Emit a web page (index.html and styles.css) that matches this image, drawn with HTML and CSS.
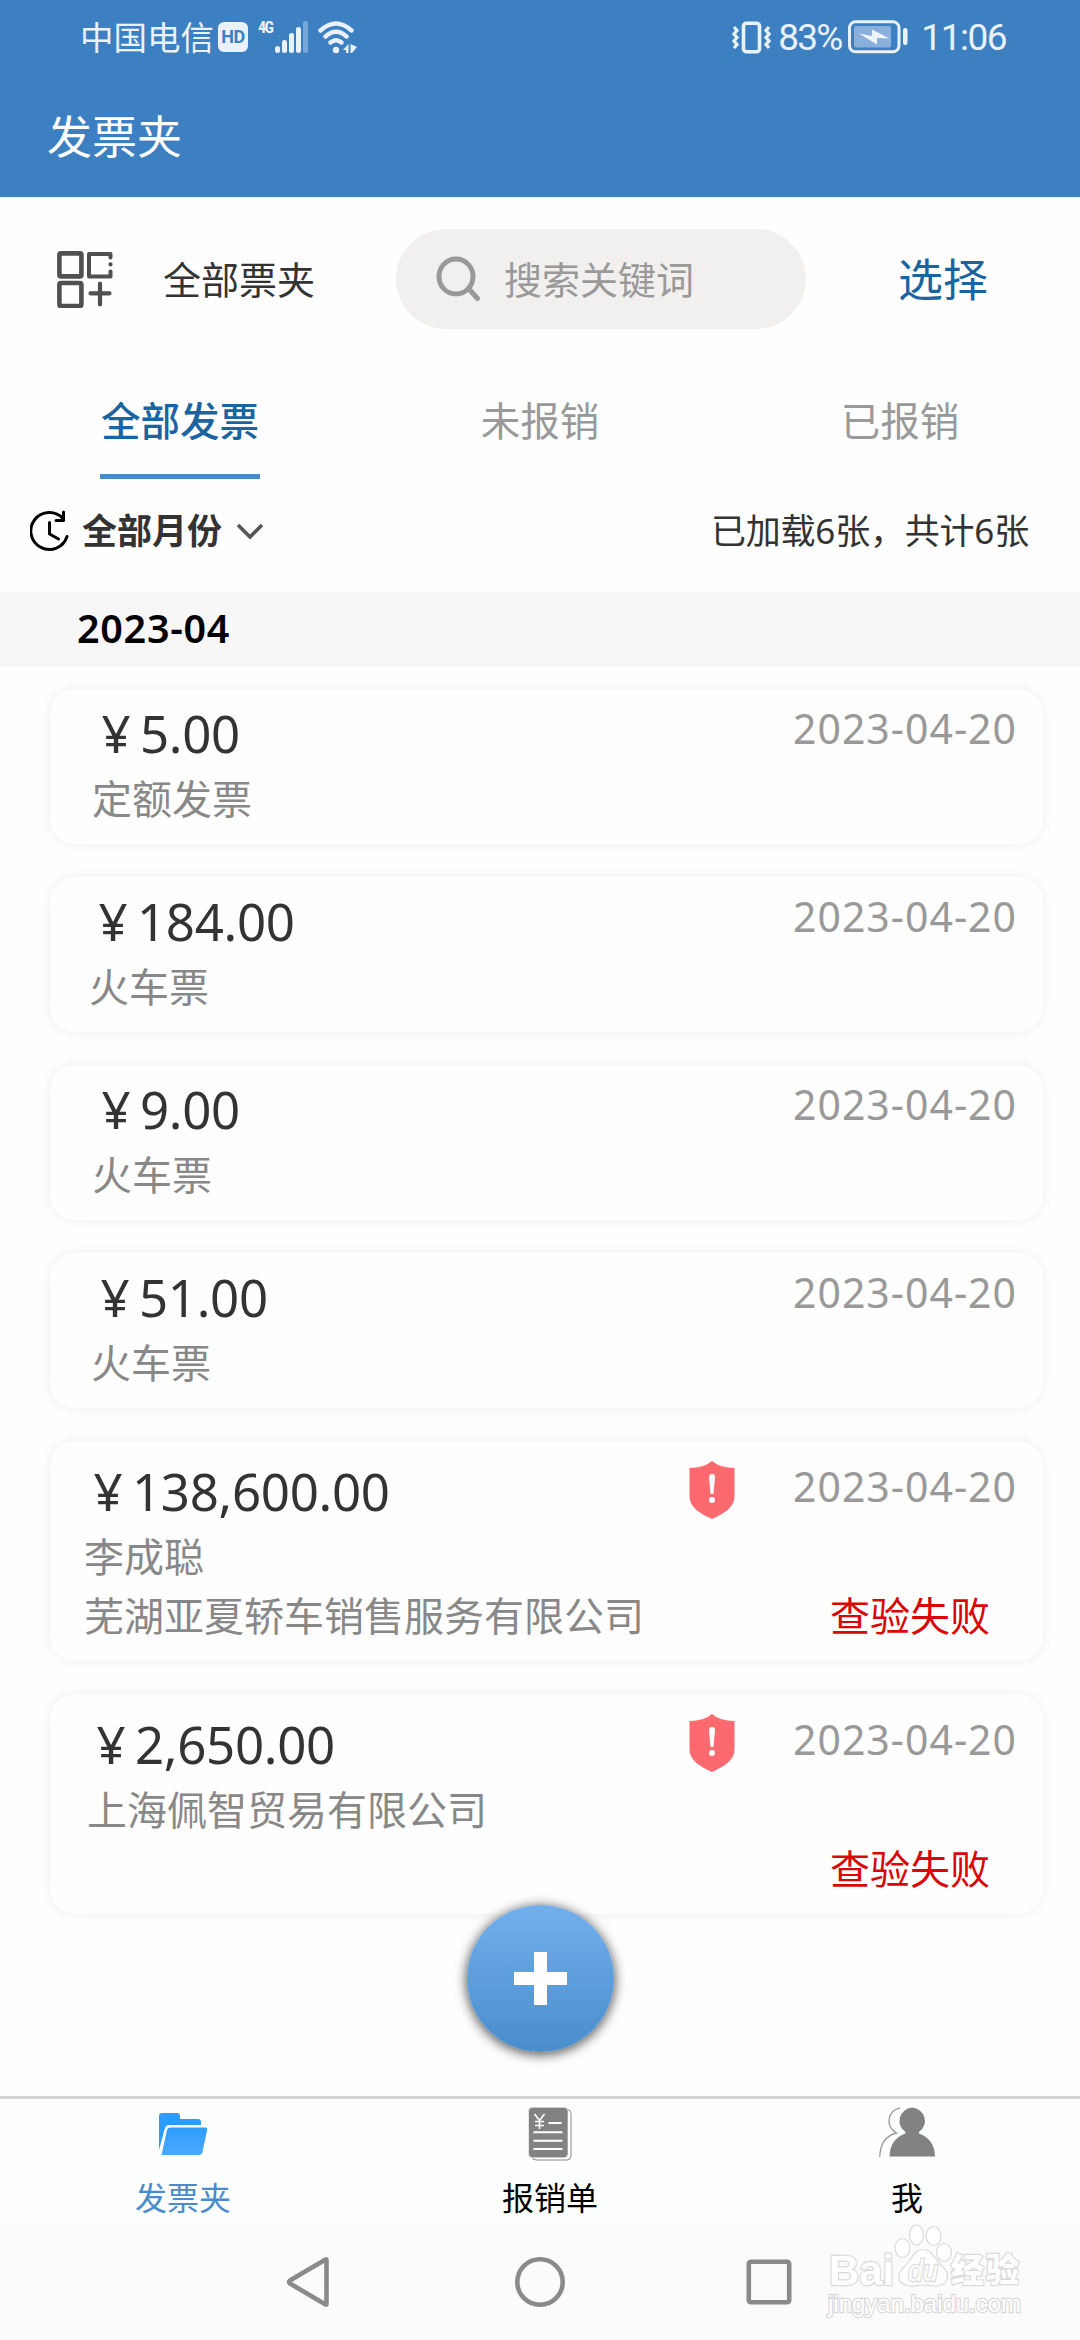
FILE: index.html
```html
<!DOCTYPE html>
<html lang="zh-CN">
<head>
<meta charset="utf-8">
<title>发票夹</title>
<link rel="stylesheet" href="styles.css">
</head>
<body>
<div class="screen">
  <header class="header">
    <div class="status">
      <div class="status-left">
        <span class="carrier">中国电信</span>
        <span class="hd">HD</span>
        <span class="net">4G</span>
        <svg class="signal" width="33" height="32" viewBox="0 0 33 32" fill="#e9f1fb">
          <rect x="0" y="25" width="5" height="7" rx="2.5"/><rect x="7" y="19" width="5" height="13" rx="2.2"/><rect x="14" y="12" width="5" height="20" rx="2.2"/><rect x="21" y="6" width="5" height="26" rx="2.2"/><rect x="28" y="0" width="5" height="32" rx="2.2" opacity=".35"/>
        </svg>
        <svg width="39" height="33" viewBox="0 0 39 33" fill="none" stroke="#e9f1fb" stroke-width="4.4" stroke-linecap="round">
          <path d="M2.5 9.5Q18 -4.5 33.500 9.500M7.500 15.500Q18 6 28.500 15.500M12.500 21.500Q18 17 23.500 21.500"/>
          <circle cx="18" cy="29" r="3.200" fill="#e9f1fb" stroke="none"/>
          <path d="M30.500 23v9h-2.500v-3h-3zM32.500 23v9l1.500 0 5-6z" fill="#e9f1fb" stroke="none"/>
        </svg>
      </div>
      <div class="status-right">
        <svg width="39" height="33" viewBox="0 0 39 33" fill="none" stroke="#e9f1fb">
          <rect x="11.500" y="2.200" width="16" height="28.600" rx="3" stroke-width="3.600"/>
          <path d="M2 6l3 3.500-3 3.500 3 3.500-3 3.500 3 3.500-3 3.500M37 6l-3 3.500 3 3.500-3 3.500 3 3.500-3 3.500 3 3.500" stroke-width="3.200"/>
        </svg>
        <span class="percent">83%</span>
        <svg width="61" height="34" viewBox="0 0 61 34">
          <rect x="1.500" y="1.800" width="49.500" height="30" rx="6" fill="none" stroke="#e9f1fb" stroke-width="3"/>
          <rect x="6" y="6" width="37" height="21.500" rx="2" fill="#89b0dc"/>
          <path d="M11 13.500L24 16V9.500L41.500 18.500 29 18v6.500z" fill="#eff5fc"/>
          <rect x="55" y="8" width="4.500" height="17" rx="2.200" fill="#e9f1fb"/>
        </svg>
        <span class="clock">11:06</span>
      </div>
    </div>
    <h1 class="title">发票夹</h1>
  </header>

  <div class="toolbar">
    <div class="folder-pick">
      <svg width="56" height="57" viewBox="0 0 56 57" fill="none" stroke="#505050" stroke-width="4.600" stroke-linecap="round" stroke-linejoin="round">
        <rect x="2.400" y="2.400" width="22" height="23" rx="1.500"/><rect x="2.400" y="32" width="22" height="23" rx="1.500"/>
        <path d="M53.500 6.500V3H32V25.500H53.500V20.500" stroke-width="4"/><path d="M53.500 13.300v.2M43 32.500V53.500M33.500 42.300H52.500" stroke-width="4.200"/>
      </svg>
      <span>全部票夹</span>
    </div>
    <div class="search">
      <svg width="46" height="46" viewBox="0 0 46 46" fill="none" stroke="#999" stroke-width="5"><ellipse cx="20" cy="20.500" rx="17" ry="17.500"/><path d="M32.500 32.500L41.500 42.500" stroke-linecap="round"/></svg>
      <span>搜索关键词</span>
    </div>
    <a class="select">选择</a>
  </div>

  <nav class="tabs">
    <a class="tab tab-active"><span>全部发票</span></a>
    <a class="tab"><span>未报销</span></a>
    <a class="tab"><span>已报销</span></a>
  </nav>

  <div class="filter">
    <div class="month-pick">
      <svg width="40" height="43" viewBox="0 0 40 43" fill="none" stroke="#000" stroke-width="3" stroke-linecap="round" stroke-linejoin="round"><path d="M33 8.500A18.500 18.500 0 1 0 37 26.500"/><path d="M19.500 12.500V24L28.500 29M33.500 2V10.500H26"/></svg>
      <span>全部月份</span>
      <svg class="chevron" width="28" height="17" viewBox="0 0 28 17" fill="none" stroke="#555" stroke-width="3.600"><path d="M2 2L14 14 26 2"/></svg>
    </div>
    <span class="count">已加载6张，共计6张</span>
  </div>

  <h2 class="month">2023-04</h2>

  <main class="list">
    <article class="card">
      <div class="amount"><span class="yen">¥</span>5.00</div><time class="date">2023-04-20</time>
      <div class="label">定额发票</div>
    </article>
    <article class="card wide-3">
      <div class="amount"><span class="yen">¥</span>184.00</div><time class="date">2023-04-20</time>
      <div class="label">火车票</div>
    </article>
    <article class="card">
      <div class="amount"><span class="yen">¥</span>9.00</div><time class="date">2023-04-20</time>
      <div class="label">火车票</div>
    </article>
    <article class="card wide-2">
      <div class="amount"><span class="yen">¥</span>51.00</div><time class="date">2023-04-20</time>
      <div class="label">火车票</div>
    </article>
    <article class="card tall wide-6">
      <div class="amount"><span class="yen">¥</span>138,600.00</div>
      <svg class="shield" width="46" height="58" viewBox="0 0 46 58"><path d="M23 0Q31 7 45.500 7V35C45.500 46 36 52 23 58 10 52 .5 46 .5 35V7Q15 7 23 0z" fill="#fc6a70"/><path d="M20 16q0-3 3-3t3 3L24.500 33h-3z" fill="#fff"/><circle cx="23" cy="39" r="3" fill="#fff"/></svg>
      <time class="date">2023-04-20</time>
      <div class="label">李成聪</div>
      <div class="label">芜湖亚夏轿车销售服务有限公司</div>
      <div class="failed">查验失败</div>
    </article>
    <article class="card tall wide-5">
      <div class="amount"><span class="yen">¥</span>2,650.00</div>
      <svg class="shield" width="46" height="58" viewBox="0 0 46 58"><path d="M23 0Q31 7 45.500 7V35C45.500 46 36 52 23 58 10 52 .5 46 .5 35V7Q15 7 23 0z" fill="#fc6a70"/><path d="M20 16q0-3 3-3t3 3L24.500 33h-3z" fill="#fff"/><circle cx="23" cy="39" r="3" fill="#fff"/></svg>
      <time class="date">2023-04-20</time>
      <div class="label">上海佩智贸易有限公司</div>
      <div class="failed">查验失败</div>
    </article>
    <button class="add" aria-label="添加">
      <svg width="53" height="53" viewBox="0 0 53 53"><path d="M20 0h13v20h20v13H33v20H20V33H0V20h20z" fill="#fff"/></svg>
    </button>
  </main>

  <nav class="bottom-tabs">
    <a class="bottom-tab bottom-active">
      <svg width="50" height="54" viewBox="0 0 50 54">
        <defs><linearGradient id="f" x2="0" y2="1"><stop stop-color="#2f9cfb"/><stop offset="1" stop-color="#4aa9ff"/></linearGradient></defs>
        <path d="M1 9q0-3 3-3H19q3 0 3 3v3H40q3 0 3 3V18H11Q8 18 7 21L1 43z" fill="#2b9cfb"/>
        <path d="M12 20.500H47q3 0 2 3L44.500 45q-.8 3-3.500 3H3.500L9 23q.7-2.500 3-2.500z" fill="url(#f)"/>
      </svg>
      <span>发票夹</span>
    </a>
    <a class="bottom-tab">
      <svg width="44" height="54" viewBox="0 0 44 54">
        <rect x="4" y="2.500" width="39" height="50.500" rx="4" fill="#fff" stroke="#888" stroke-width="1"/>
        <rect x=".5" y=".3" width="39.500" height="50.500" rx="4" fill="#828282" stroke="#fff" stroke-width=".6"/>
        <path d="M6.500 7L11.500 13.500 16.500 7M11.500 13.500V22M7 14.500H16M7 18.500H16" fill="none" stroke="#fff" stroke-width="1.600"/>
        <path d="M20.500 16H33.500M5.500 25.300H34.500M5.500 33.700H34.500M5.500 42H34.500" stroke="#fff" stroke-width="2"/>
      </svg>
      <span>报销单</span>
    </a>
    <a class="bottom-tab">
      <svg width="57" height="54" viewBox="0 0 57 54">
        <path d="M33 .5a14 13.500 0 0 1 7 24.500v1.500Q55.500 32 56 49.500H10.500Q11 32 26.500 26.500V25A14 13.500 0 0 1 33 .5z" fill="#828282"/>
        <path d="M21 .8C8 4 6 19 17.500 26 6 29 1 37 .8 50" fill="none" stroke="#999" stroke-width="1.300"/>
      </svg>
      <span>我</span>
    </a>
  </nav>

  <footer class="system-nav">
    <svg width="45" height="52" viewBox="0 0 45 52"><path d="M40.500 4V48Q40.500 49 39.500 48.500L4 27.500Q2 26 4 24.500L39.500 3.500Q40.500 3 40.500 4z" fill="none" stroke="#8a8a8a" stroke-width="4.600"/></svg>
    <svg width="52" height="52" viewBox="0 0 52 52"><circle cx="26" cy="26" r="22.700" fill="none" stroke="#8a8a8a" stroke-width="4.600"/></svg>
    <svg width="46" height="46" viewBox="0 0 46 46"><rect x="2.800" y="2.800" width="40.400" height="40.400" rx="2" fill="none" stroke="#8a8a8a" stroke-width="4.600"/></svg>
    <svg class="watermark" width="200" height="98" viewBox="0 0 200 98" fill="#fff" stroke="#dadada" stroke-width="1.200">
      <text class="mark-latin" x="2" y="61" font-size="43" textLength="65" lengthAdjust="spacingAndGlyphs">Bai</text>
      <ellipse cx="89.500" cy="11" rx="7" ry="10"/><ellipse cx="106.500" cy="12" rx="7.500" ry="9.500"/><ellipse cx="75.500" cy="24" rx="7.500" ry="9.500"/><ellipse cx="117" cy="28.500" rx="7.500" ry="9"/>
      <path d="M96 25.500C106 25.500 108 37 116 43 124 50 121 62 109 62 104 62 100 61 96 61 91 61 88 62.500 83 62 70 61 69 50 77 43 85 36 86 25.500 96 25.500z"/>
      <text class="mark-latin mark-du" x="81" y="57" font-size="29" textLength="30" lengthAdjust="spacingAndGlyphs">du</text>
      <text class="mark-cjk" x="124" y="58" font-size="33" textLength="68">经验</text>
      <text class="mark-url" x="1" y="88" font-size="24" textLength="193" lengthAdjust="spacingAndGlyphs">jingyan.baidu.com</text>
    </svg>
  </footer>
</div>
</body>
</html>
```
FILE: styles.css
```css
* { box-sizing: border-box; }
body { margin: 0; background: #fefefe; }
svg { display: block; flex: none; }
h1, h2 { margin: 0; }

.screen {
  display: flex;
  flex-direction: column;
  width: 1080px;
  height: 2340px;
  overflow: hidden;
  background: #fefefe;
  color: #333;
  font-family: "Noto Sans", "Noto Sans CJK SC", sans-serif;
  white-space: nowrap;
}

/* status bar and title */
.header { height: 197px; background: #3d80c1; color: #fff; }
.status { display: flex; justify-content: space-between; height: 74px; padding: 0 74px 0 80px; color: #e9f1fb; }
.status-left, .status-right { display: flex; align-items: center; }
.carrier { font-size: 33.500px; line-height: 74px; }
.hd { width: 30px; height: 30px; margin: 0 0 1px 4px; border-radius: 6px; background: #e9f1fb; color: #3d80c1; font: 700 18px/30px Roboto, sans-serif; text-align: center; letter-spacing: -.5px; }
.net { width: 17px; margin: 0 0 19px 10px; font: 700 16px/20px "Roboto Condensed", Roboto, sans-serif; letter-spacing: -1.500px; }
.signal { margin: 0 10px 0 0; }
.percent, .clock { font-family: Roboto, sans-serif; font-size: 37px; line-height: 74px; }
.percent { margin: 1px 7px 0 7px; letter-spacing: -1.900px; }
.clock { margin: 1px 0 0 12px; letter-spacing: -1.500px; }
.title { padding-left: 47px; font-size: 45px; font-weight: 400; line-height: 125px; }

/* folder, search, select */
.toolbar { display: flex; align-items: center; height: 164px; padding: 0 92px 0 57px; }
.folder-pick { display: flex; align-items: center; gap: 50px; width: 339px; font-size: 38px; line-height: 60px; }
.search { display: flex; align-items: center; gap: 22px; width: 410px; height: 100px; padding-left: 40px; border-radius: 50px; background: #f1f0ee; color: #999; font-size: 38px; line-height: 60px; }
.select { margin: 2px 0 0 auto; color: #1a64a1; font-size: 45px; line-height: 60px; }

.tabs { display: flex; height: 118px; }
.tab { display: flex; flex: 1; justify-content: center; color: #999; font-size: 39.500px; }
.tab span { padding-top: 7px; line-height: 106px; }
.tab-active { color: #1a64a1; font-weight: 500; }
.tab-active span { width: 160px; border-bottom: 5px solid #4a8ccb; text-align: center; }

.filter { display: flex; align-items: center; justify-content: space-between; height: 113px; padding: 0 51px 9px 30px; font-size: 35px; line-height: 50px; }
.month-pick { display: flex; align-items: center; gap: 12px; font-weight: 700; }
.chevron { margin-left: 2px; }
.count { letter-spacing: -.2px; }

.month { height: 74px; padding-left: 77px; background: #f7f7f7; color: #000; font-size: 39.500px; font-weight: 600; line-height: 73px; letter-spacing: .7px; }

/* invoices */
.list { position: relative; display: flex; flex: 1; flex-direction: column; gap: 33px; padding: 23px 37px 0 50px; }
.card {
  display: grid;
  grid-template-columns: minmax(0, 1fr) 46px 224px;
  grid-template-rows: 72px 59px 59px;
  column-gap: 58px;
  height: 155px;
  padding: 8px 26px 0 42px;
  border-radius: 25px;
  background: #fefefe;
  box-shadow: 0 0 8px 3px rgba(0, 0, 0, .045);
}
.tall { height: 220px; padding-top: 14px; }
.wide-2 { padding-left: 41px; }
.wide-3 { padding-left: 39px; }
.wide-5 { padding-left: 37px; }
.wide-6 { padding-left: 34px; }
.amount { grid-column: 1; grid-row: 1; font-size: 51px; line-height: 72px; letter-spacing: -.3px; }
.yen { display: inline-block; width: 48px; text-align: center; }
.shield { grid-column: 2; grid-row: 1; margin-top: 6px; }
.date { grid-column: 3; grid-row: 1; color: #999; font-size: 41px; line-height: 62px; letter-spacing: 1px; }
.label { grid-column: 1; color: #888; font-size: 40px; line-height: 59px; }
.failed { grid-column: 3; grid-row: 3; padding-left: 37px; color: #d90707; font-size: 40px; line-height: 59px; }

.add {
  position: absolute;
  top: 1239px;
  left: 467px;
  display: grid;
  place-items: center;
  width: 147px;
  height: 147px;
  padding: 0;
  border: 0;
  border-radius: 50%;
  background: linear-gradient(#73afed, #498dcb);
  box-shadow: 0 2px 12px 1px rgba(0, 0, 0, .65);
}

/* bottom tabs */
.bottom-tabs { display: grid; grid-template-columns: 366px 368px 346px; height: 128px; border-top: 3px solid #d2d2d2; background: #fdfffe; color: #000; }
.bottom-tab { display: flex; flex-direction: column; align-items: center; padding-top: 8px; font-size: 32px; line-height: 40px; }
.bottom-tab span { margin-top: 17px; }
.bottom-active { color: #4a8ccb; }

.system-nav { position: relative; display: flex; align-items: center; height: 116px; padding: 0 0 0 286px; background: #fbfbfb; }
.system-nav svg:nth-child(2) { margin-left: 183px; }
.system-nav svg:nth-child(3) { margin-left: 180px; }
.watermark { position: absolute; top: 0; left: 827px; overflow: visible; }
.watermark text { paint-order: stroke; stroke-width: 2.400px; }
.mark-latin { font-family: "Liberation Sans", sans-serif; font-weight: 700; }
.mark-du { font-style: italic; font-weight: 400; }
.mark-cjk { font-family: "Noto Sans CJK SC", sans-serif; font-weight: 900; }
.mark-url { font-family: "Liberation Sans", sans-serif; }
```
